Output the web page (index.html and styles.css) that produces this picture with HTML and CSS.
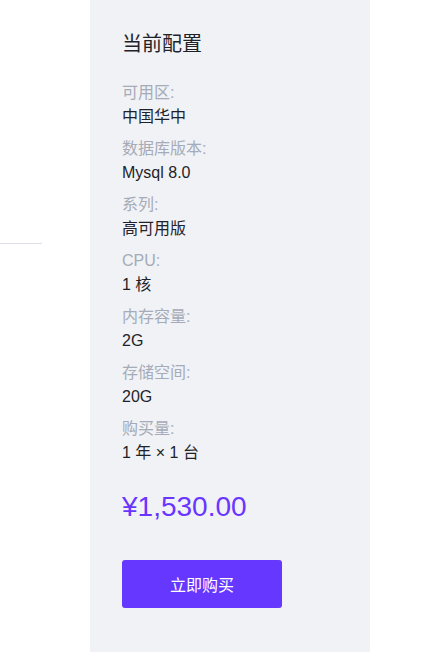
FILE: index.html
```html
<!DOCTYPE html>
<html lang="zh-CN">
<head>
    <meta charset="UTF-8">
    <meta name="viewport" content="width=device-width, initial-scale=1.0">
    <title>当前配置</title>
    <link rel="stylesheet" href="styles.css">
</head>
<body>
    <div class="page">
        <!-- left form column (cut off) -->
        <div class="form-side">
            <div class="divider"></div>
        </div>

        <!-- order summary -->
        <div class="summary">
            <h2 class="summary-title">当前配置</h2>

            <div class="item">
                <div class="item-label">可用区:</div>
                <div class="item-value">中国华中</div>
            </div>
            <div class="item">
                <div class="item-label">数据库版本:</div>
                <div class="item-value">Mysql 8.0</div>
            </div>
            <div class="item">
                <div class="item-label">系列:</div>
                <div class="item-value">高可用版</div>
            </div>
            <div class="item">
                <div class="item-label">CPU:</div>
                <div class="item-value">1 核</div>
            </div>
            <div class="item">
                <div class="item-label">内存容量:</div>
                <div class="item-value">2G</div>
            </div>
            <div class="item">
                <div class="item-label">存储空间:</div>
                <div class="item-value">20G</div>
            </div>
            <div class="item">
                <div class="item-label">购买量:</div>
                <div class="item-value">1 年 × 1 台</div>
            </div>

            <div class="price">¥1,530.00</div>

            <button class="buy-btn">立即购买</button>
        </div>
    </div>
</body>
</html>
```

FILE: styles.css
```css
body {
    margin: 0;
    font-family: "Liberation Sans", "Noto Sans CJK SC", sans-serif;
    background-color: #fff;
    color: #1f2329;
}

.page {
    display: flex;
    min-height: 652px;
}

.form-side {
    width: 90px;
}

.divider {
    width: 42px;
    height: 1px;
    margin-top: 243px;
    background-color: #dcdfe6;
}

.summary {
    width: 280px;
    box-sizing: border-box;
    padding: 30px 32px;
    background-color: #f0f2f5;
}

.summary-title {
    margin: 0 0 23px;
    font-size: 20px;
    font-weight: normal;
    line-height: 28px;
}

.item {
    margin-bottom: 9px;
    font-size: 16px;
}

.item-label {
    line-height: 24px;
    color: #a5abb8;
}

.item-value {
    padding-top: 1px;
    line-height: 22px;
    color: #1f2329;
}

.price {
    margin-top: 23px;
    font-size: 28px;
    line-height: 40px;
    color: #6a35ff;
}

.buy-btn {
    margin-top: 33px;
    width: 160px;
    height: 48px;
    padding: 0;
    border: none;
    border-radius: 3px;
    background-color: #6637ff;
    color: #fff;
    font-family: inherit;
    font-size: 16px;
    cursor: pointer;
}
```
